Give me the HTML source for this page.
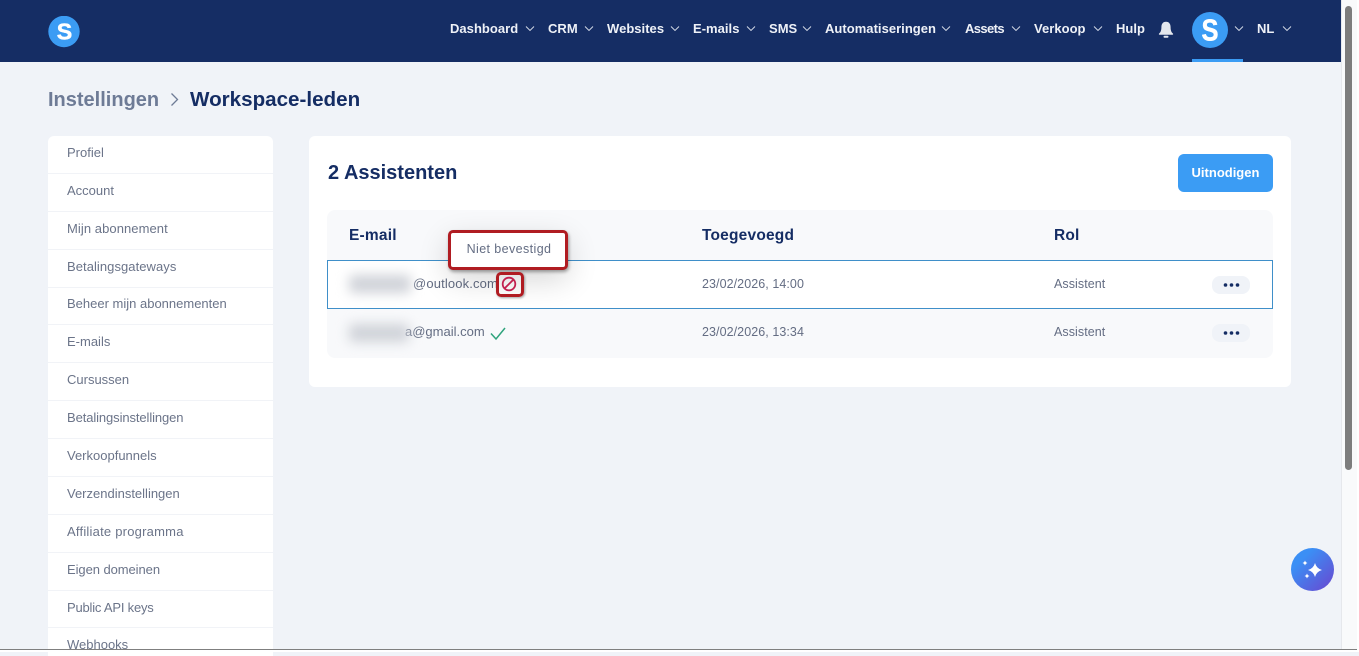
<!DOCTYPE html>
<html><head><meta charset="utf-8"><style>
html,body{margin:0;padding:0;width:1359px;height:652px;overflow:hidden;background:#f0f3f8;font-family:"Liberation Sans",sans-serif}
.a{position:absolute;white-space:nowrap}
#nav{left:0;top:0;width:1341px;height:62px;background:#152d64}
.n{top:21px;font-size:13px;font-weight:700;color:#eef1f7;line-height:16px;letter-spacing:.03px}
.c{top:25px}
.s{left:67px;font-size:13px;line-height:16px;color:#6b7489;letter-spacing:0}
.l{left:48px;width:225px;height:1px;background:#f1f3f7}
.h{top:227px;font-size:15.5px;line-height:18px;font-weight:700;color:#152d64;letter-spacing:.2px}
.t{font-size:12.5px;line-height:16px;color:#646d83;letter-spacing:.07px}
.d{width:38px;height:18px;border-radius:8px;background:#f0f3f8}
.blur{background:#cfd2d8;filter:blur(6px);border-radius:4px}
</style></head><body>
<div class="a" id="nav"></div>
<svg class="a" style="left:48px;top:16px" width="32" height="32" viewBox="0 0 32 32"><circle cx="16" cy="15.500" r="15.700" fill="#3b9cf4"/><text x="16.500" y="23.700" text-anchor="middle" font-family="Liberation Sans" font-weight="700" font-size="23.500" fill="#fff" stroke="#fff" stroke-width=".5" textLength="15.500" lengthAdjust="spacingAndGlyphs">S</text></svg>

<div class="a n" style="left:450px">Dashboard</div>
<svg class="a c" style="left:525px" width="10" height="7"><path d="M1 1.500l4 4 4-4" fill="none" stroke="#d8deea" stroke-width=".9"/></svg>
<div class="a n" style="left:548px">CRM</div>
<svg class="a c" style="left:584px" width="10" height="7"><path d="M1 1.500l4 4 4-4" fill="none" stroke="#d8deea" stroke-width=".9"/></svg>
<div class="a n" style="left:607px">Websites</div>
<svg class="a c" style="left:670px" width="10" height="7"><path d="M1 1.500l4 4 4-4" fill="none" stroke="#d8deea" stroke-width=".9"/></svg>
<div class="a n" style="left:693px">E-mails</div>
<svg class="a c" style="left:746px" width="10" height="7"><path d="M1 1.500l4 4 4-4" fill="none" stroke="#d8deea" stroke-width=".9"/></svg>
<div class="a n" style="left:769px">SMS</div>
<svg class="a c" style="left:802px" width="10" height="7"><path d="M1 1.500l4 4 4-4" fill="none" stroke="#d8deea" stroke-width=".9"/></svg>
<div class="a n" style="left:825px">Automatiseringen</div>
<svg class="a c" style="left:941px" width="10" height="7"><path d="M1 1.500l4 4 4-4" fill="none" stroke="#d8deea" stroke-width=".9"/></svg>
<div class="a n" style="left:965px;letter-spacing:-.6px">Assets</div>
<svg class="a c" style="left:1011px" width="10" height="7"><path d="M1 1.500l4 4 4-4" fill="none" stroke="#d8deea" stroke-width=".9"/></svg>
<div class="a n" style="left:1034px">Verkoop</div>
<svg class="a c" style="left:1093px" width="10" height="7"><path d="M1 1.500l4 4 4-4" fill="none" stroke="#d8deea" stroke-width=".9"/></svg>
<div class="a n" style="left:1116px">Hulp</div>
<svg class="a" style="left:1158px;top:21px" width="16" height="18" viewBox="0 0 16 18"><path d="M8 .8C4.800.8 3.400 3.200 3.400 6.200c0 3.200-.8 5-2.300 6.300-.5.5-.2 1.300.5 1.300h12.800c.7 0 1-.8.5-1.300-1.500-1.300-2.300-3.100-2.300-6.300C12.600 3.200 11.200.8 8 .8z" fill="#e4e7ed"/><rect x="5.500" y="14.800" width="5" height="2" rx="1" fill="#e4e7ed"/></svg>
<svg class="a" style="left:1192px;top:12px" width="36" height="36" viewBox="0 0 36 36"><circle cx="18" cy="18" r="18" fill="#3b9cf4"/><text x="18" y="28.500" text-anchor="middle" font-family="Liberation Sans" font-weight="700" font-size="31" fill="#fff" stroke="#fff" stroke-width=".5" textLength="17" lengthAdjust="spacingAndGlyphs">S</text></svg>
<svg class="a c" style="left:1234px" width="10" height="7"><path d="M1 1.500l4 4 4-4" fill="none" stroke="#d8deea" stroke-width=".9"/></svg>
<div class="a n" style="left:1257px">NL</div>
<svg class="a c" style="left:1282px" width="10" height="7"><path d="M1 1.500l4 4 4-4" fill="none" stroke="#d8deea" stroke-width=".9"/></svg>
<div class="a" style="left:1192px;top:59px;width:51px;height:3px;background:#3b9cf4"></div>

<div class="a" style="left:48px;top:87px;font-size:20px;line-height:26px;font-weight:700;color:#6e7b96">Instellingen</div>
<svg class="a" style="left:169px;top:92px" width="11" height="15"><path d="M2.500 1.500l6 6-6 6" fill="none" stroke="#6e7b96" stroke-width="1.300"/></svg>
<div class="a" style="left:190px;top:87px;font-size:20.600px;line-height:26px;font-weight:700;color:#152d64">Workspace-leden</div>

<div class="a" style="left:48px;top:136px;width:225px;height:520px;background:#fff;border-radius:6px 6px 0 0"></div>
<div class="a s" style="top:145px">Profiel</div><div class="a l" style="top:173px"></div>
<div class="a s" style="top:183px">Account</div><div class="a l" style="top:211px"></div>
<div class="a s" style="top:221px;letter-spacing:.07px">Mijn abonnement</div><div class="a l" style="top:249px"></div>
<div class="a s" style="top:259px;letter-spacing:.06px">Betalingsgateways</div><div class="a l" style="top:287px"></div>
<div class="a s" style="top:296px">Beheer mijn abonnementen</div><div class="a l" style="top:324px"></div>
<div class="a s" style="top:334px">E-mails</div><div class="a l" style="top:362px"></div>
<div class="a s" style="top:372px">Cursussen</div><div class="a l" style="top:400px"></div>
<div class="a s" style="top:410px;letter-spacing:-.1px">Betalingsinstellingen</div><div class="a l" style="top:438px"></div>
<div class="a s" style="top:448px">Verkoopfunnels</div><div class="a l" style="top:476px"></div>
<div class="a s" style="top:486px">Verzendinstellingen</div><div class="a l" style="top:514px"></div>
<div class="a s" style="top:524px;letter-spacing:.22px">Affiliate programma</div><div class="a l" style="top:552px"></div>
<div class="a s" style="top:562px;letter-spacing:-.07px">Eigen domeinen</div><div class="a l" style="top:590px"></div>
<div class="a s" style="top:600px;letter-spacing:-.2px">Public API keys</div><div class="a l" style="top:627px"></div>
<div class="a s" style="top:637px">Webhooks</div>

<div class="a" style="left:309px;top:136px;width:982px;height:251px;background:#fff;border-radius:6px"></div>
<div class="a" style="left:328px;top:160px;font-size:20px;line-height:26px;font-weight:700;color:#152d64">2 Assistenten</div>
<div class="a" style="left:1178px;top:154px;width:95px;height:38px;background:#3b9cf4;border-radius:6px;color:#fff;font-size:13px;font-weight:700;line-height:37px;text-align:center">Uitnodigen</div>

<div class="a" style="left:327px;top:210px;width:946px;height:148px;background:#f8f9fb;border-radius:8px"></div>
<div class="a h" style="left:349px">E-mail</div>
<div class="a h" style="left:702px">Toegevoegd</div>
<div class="a h" style="left:1054px">Rol</div>

<div class="a" style="left:327px;top:260px;width:944px;height:47px;background:#fff;border:1px solid #3f8fc9"></div>
<div class="a t" style="left:413px;top:276px;font-size:13px;letter-spacing:.14px">@outlook.com</div>
<div class="a blur" style="left:349px;top:275px;width:62px;height:18px"></div>
<div class="a t" style="left:702px;top:276px">23/02/2026, 14:00</div>
<div class="a t" style="left:1054px;top:276px">Assistent</div>
<div class="a d" style="left:1212px;top:276px"></div>
<svg class="a" style="left:1223px;top:282px" width="17" height="6"><circle cx="2.500" cy="3" r="1.800" fill="#152d64"/><circle cx="8.500" cy="3" r="1.800" fill="#152d64"/><circle cx="14.500" cy="3" r="1.800" fill="#152d64"/></svg>

<div class="a t" style="left:405px;top:324px;font-size:13px;letter-spacing:0">a@gmail.com</div>
<div class="a blur" style="left:349px;top:324px;width:60px;height:18px"></div>
<svg class="a" style="left:490px;top:327px" width="16" height="14"><path d="M1 6.500L6 12 15 1" fill="none" stroke="#2fa37c" stroke-width="1.500"/></svg>
<div class="a t" style="left:702px;top:324px">23/02/2026, 13:34</div>
<div class="a t" style="left:1054px;top:324px">Assistent</div>
<div class="a d" style="left:1212px;top:324px"></div>
<svg class="a" style="left:1223px;top:330px" width="17" height="6"><circle cx="2.500" cy="3" r="1.800" fill="#152d64"/><circle cx="8.500" cy="3" r="1.800" fill="#152d64"/><circle cx="14.500" cy="3" r="1.800" fill="#152d64"/></svg>

<div class="a" style="left:448px;top:230px;width:114px;height:34px;background:#fff;border:3px solid #b01c22;border-radius:5px;box-shadow:1px 2px 3px rgba(0,0,0,.35),0 10px 30px rgba(0,0,0,.16);color:#646d83;font-size:12.500px;line-height:32px;text-align:center;letter-spacing:.4px;text-indent:2px">Niet bevestigd</div>
<div class="a" style="left:496px;top:272px;width:22px;height:19px;border:3px solid #b01c22;border-radius:5px;box-shadow:1px 1px 2px rgba(0,0,0,.35)"></div>
<svg class="a" style="left:501px;top:276px" width="16" height="16" viewBox="0 0 16 16"><circle cx="8" cy="8" r="6.300" fill="none" stroke="#c2204f" stroke-width="1.800"/><path d="M3.600 12.400L12.400 3.600" stroke="#c2204f" stroke-width="1.800"/></svg>

<div class="a" style="left:1291px;top:548px;width:43px;height:43px;border-radius:50%;background:linear-gradient(135deg,#3b8ff5 25%,#6a45cf 100%)"></div>
<svg class="a" style="left:1302px;top:560px" width="22" height="21" viewBox="0 0 22 21"><path d="M13 3Q14.500 8.500 20 10 14.500 11.500 13 17 11.500 11.500 6 10 11.500 8.500 13 3z" fill="#fff"/><path d="M3 .5Q3.600 2.400 5.500 3 3.600 3.600 3 5.500 2.400 3.600.5 3 2.400 2.400 3 .5zM5 13.500Q5.600 15.400 7.500 16 5.600 16.600 5 18.500 4.400 16.600 2.500 16 4.400 15.400 5 13.500z" fill="#fff"/></svg>

<div class="a" style="left:1341px;top:0;width:16px;height:652px;background:#f9fafb;border-left:1px solid #e6e8ec;box-sizing:border-box"></div>
<div class="a" style="left:1345px;top:6px;width:7px;height:464px;background:#7d7d7d;border-radius:4px"></div>
<div class="a" style="left:1357px;top:0;width:2px;height:652px;background:#fff"></div>
<div class="a" style="left:0;top:649px;width:1357px;height:1px;background:#7f7f7f"></div>
<div class="a" style="left:0;top:650px;width:1359px;height:2px;background:#fff"></div>
</body></html>
